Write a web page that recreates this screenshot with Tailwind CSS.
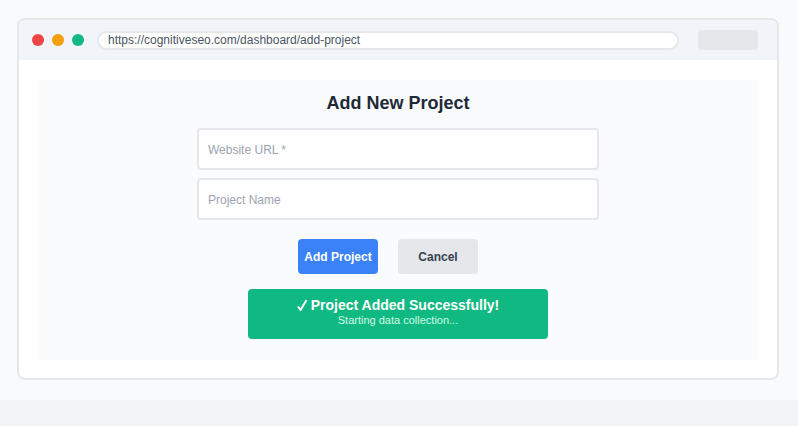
<!DOCTYPE html>
<html lang="en">
<head>
  <meta charset="UTF-8">
  <title>Add Project</title>
  <script src="https://cdn.jsdelivr.net/npm/@tailwindcss/browser@4"></script>
</head>
<body class="bg-[#f3f4f6] font-['Liberation_Sans',Arial,sans-serif] h-[426px] overflow-hidden">

  <div class="bg-[#f8fafc] h-[400px] pl-[17px] pr-[19px] pt-[18px]">
    <div class="bg-white border-2 border-[#e5e7eb] rounded-lg h-[362px] overflow-hidden">

      <!-- Browser bar -->
      <div class="bg-[#f1f5f9] h-10 flex items-center pl-[13px] pr-[19px]">
        <div class="flex gap-2">
          <span class="w-3 h-3 rounded-full bg-[#ef4444]"></span>
          <span class="w-3 h-3 rounded-full bg-[#f59e0b]"></span>
          <span class="w-3 h-3 rounded-full bg-[#10b981]"></span>
        </div>
        <div class="ml-[13px] w-[582px] h-[19px] bg-white border-2 border-[#e5e7eb] rounded-full pl-[9px] text-xs leading-[15px] text-[#4b5563]">https://cognitiveseo.com/dashboard/add-project</div>
        <div class="ml-auto w-[60px] h-5 bg-[#e5e7eb] rounded"></div>
      </div>

      <!-- Form panel -->
      <div class="bg-[#f9fbfd] mx-[19px] mt-5 h-[280px] flex flex-col items-center">
        <h1 class="text-lg font-bold text-[#1f2937] leading-5 mt-[13px]">Add New Project</h1>

        <div class="mt-[15px] flex flex-col gap-2">
          <input type="text" placeholder="Website URL *" class="w-[402px] h-[42px] bg-white border-2 border-[#e5e7eb] rounded px-[9px] pt-0.5 text-xs placeholder:text-[#9ca3af]">
          <input type="text" placeholder="Project Name" class="w-[402px] h-[42px] bg-white border-2 border-[#e5e7eb] rounded px-[9px] pt-0.5 text-xs placeholder:text-[#9ca3af]">
        </div>

        <div class="mt-[19px] flex gap-5 pr-5">
          <button class="w-20 h-[35px] bg-[#3b82f6] text-white text-xs font-bold rounded">Add Project</button>
          <button class="w-20 h-[35px] bg-[#e5e7eb] text-[#374151] text-xs font-bold rounded">Cancel</button>
        </div>

        <div class="mt-[15px] w-[300px] h-[50px] bg-[#10b981] text-white rounded flex flex-col items-center pt-2">
          <div class="flex items-center gap-[3px] text-sm font-bold leading-4">
            <svg class="w-[11px] h-3" viewBox="0 0 11 12" fill="none" stroke="currentColor" stroke-width="2"><path d="M1 7.5l2.6 3.5L9.5 1"/></svg>
            <span>Project Added Successfully!</span>
          </div>
          <div class="text-[11px] leading-3 mt-px text-[#d1fae5]">Starting data collection...</div>
        </div>
      </div>

    </div>
  </div>

</body>
</html>
